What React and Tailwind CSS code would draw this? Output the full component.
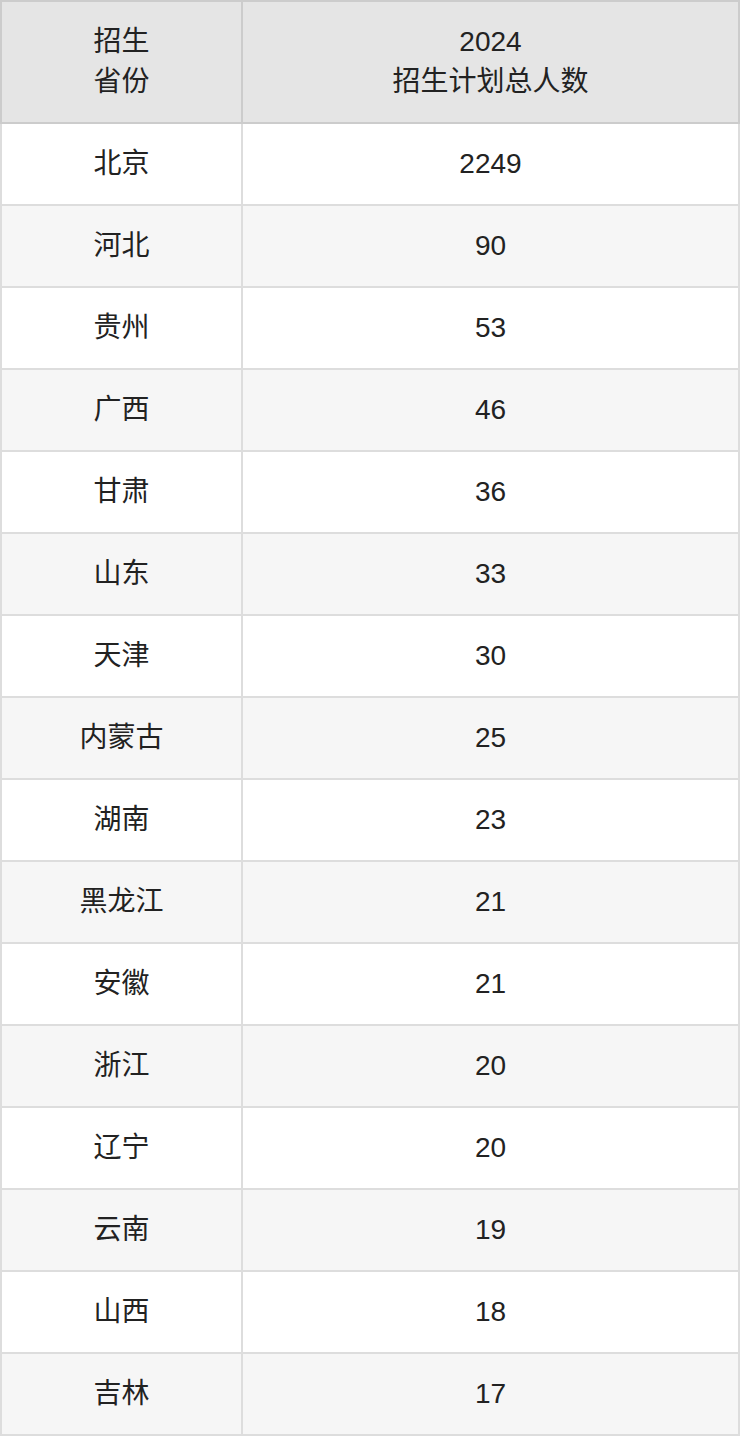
import React from "react";

const rows = [
  ["北京", "2249"],
  ["河北", "90"],
  ["贵州", "53"],
  ["广西", "46"],
  ["甘肃", "36"],
  ["山东", "33"],
  ["天津", "30"],
  ["内蒙古", "25"],
  ["湖南", "23"],
  ["黑龙江", "21"],
  ["安徽", "21"],
  ["浙江", "20"],
  ["辽宁", "20"],
  ["云南", "19"],
  ["山西", "18"],
  ["吉林", "17"],
];

export default function App() {
  return (
    <div
      className="w-[740px] text-[28px] leading-[40px] text-[#222222]"
      style={{ fontFamily: '"Liberation Sans", "Noto Sans CJK SC", sans-serif' }}
    >
      <div className="grid grid-cols-[243px_497px]">
        <div className="h-[124px] flex flex-col items-center justify-center bg-[#e5e5e5] border-2 border-[#cccccc]">
          <span>招生</span>
          <span>省份</span>
        </div>
        <div className="h-[124px] flex flex-col items-center justify-center bg-[#e5e5e5] border-t-2 border-r-2 border-b-2 border-[#cccccc]">
          <span>2024</span>
          <span>招生计划总人数</span>
        </div>
        {rows.map(([p, n], i) => {
          const bg = i % 2 === 0 ? "bg-white" : "bg-[#f6f6f6]";
          return (
            <React.Fragment key={p}>
              <div
                className={`h-[82px] flex items-center justify-center border-l-2 border-r-2 border-b-2 border-[#dddddd] ${bg}`}
              >
                {p}
              </div>
              <div
                className={`h-[82px] flex items-center justify-center border-r-2 border-b-2 border-[#dddddd] ${bg}`}
              >
                {n}
              </div>
            </React.Fragment>
          );
        })}
      </div>
    </div>
  );
}
